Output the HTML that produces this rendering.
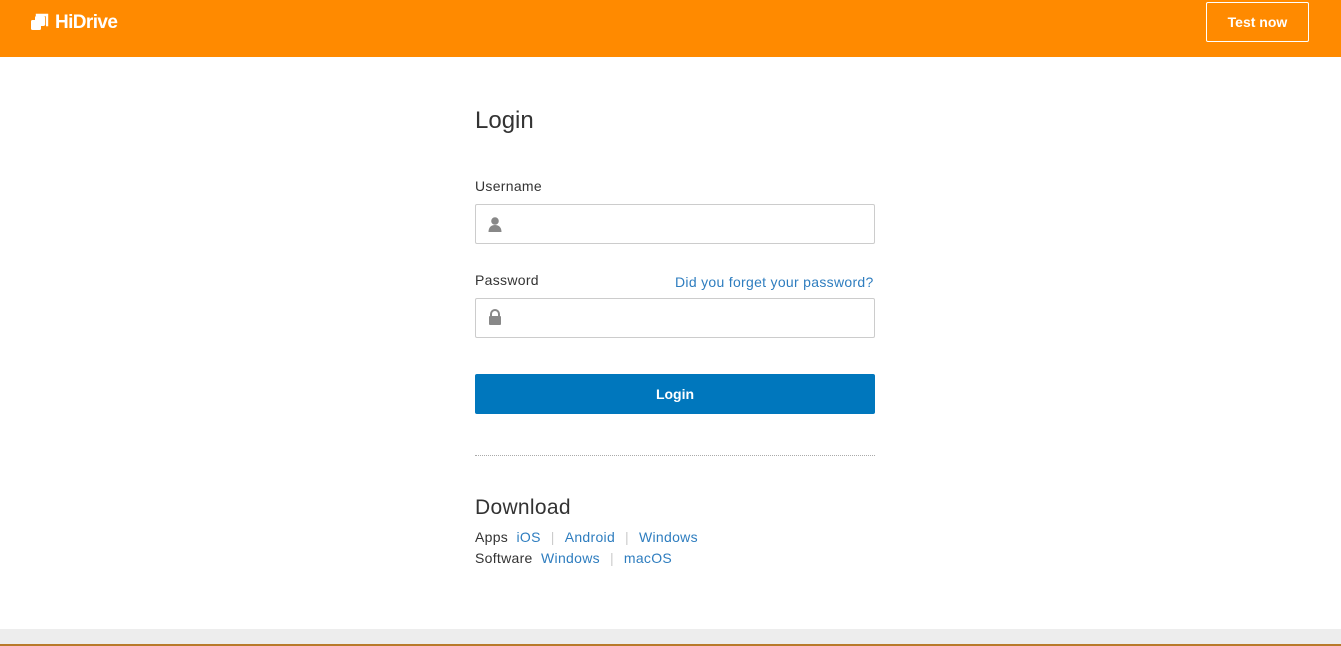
<!DOCTYPE html>
<html><head><style>
*{margin:0;padding:0;box-sizing:border-box}
body{width:1341px;height:646px;overflow:hidden;background:#fff;font-family:"Liberation Sans",sans-serif;position:relative;color:#333}
.hdr{position:absolute;left:0;top:0;width:1341px;height:57px;background:#ff8a00}
.logo{position:absolute;top:12px;color:#fff;font-weight:bold;font-size:19px;letter-spacing:-0.6px}
.btn{position:absolute;left:1206px;top:2px;width:103px;height:40px;border:1px solid #fff;border-radius:2px;color:#fff;font-weight:bold;font-size:14px;text-align:center;line-height:38px}
.abs{position:absolute}
.t{letter-spacing:0.3px}
.inp{position:absolute;left:475px;width:400px;height:40px;border:1px solid #ccc;border-radius:2px;background:#fff}
a{color:#2e7dbf;text-decoration:none}
.sep{color:#ccc;margin:0 10px}
</style></head><body>
<div class="hdr">
 <svg class="abs" style="left:30px;top:12px" width="20" height="20" viewBox="0 0 20 20"><path d="M7 4V3h10v10h-1" fill="none" stroke="#fff" stroke-width="2.4"/><rect x="1" y="8" width="10" height="10" rx="1.5" fill="#fff"/><rect x="5" y="4" width="10" height="10" rx="1.5" fill="#fff"/></svg>
 <div class="logo" style="left:55px">HiDrive</div>
 <div class="btn">Test now</div>
</div>
<div class="abs" style="left:475px;top:107px;font-size:24px">Login</div>
<div class="abs t" style="left:475px;top:178px;font-size:14px">Username</div>
<div class="inp" style="top:204px"><svg class="abs" style="left:11px;top:11px" width="16" height="16" viewBox="0 0 16 16"><circle cx="8" cy="5" r="3.8" fill="#888"/><path d="M1.5 16c0-5 3-7 6.5-7s6.5 2 6.5 7z" fill="#888"/></svg></div>
<div class="abs t" style="left:475px;top:272px;font-size:14px">Password</div>
<div class="abs t" style="left:675px;top:274px;font-size:14px"><a>Did you forget your password?</a></div>
<div class="inp" style="top:298px"><svg class="abs" style="left:12px;top:10px" width="14" height="16" viewBox="0 0 14 16"><path d="M3 7V5a4 4 0 0 1 8 0v2" fill="none" stroke="#888" stroke-width="2"/><rect x="1" y="7" width="12" height="9" rx="1" fill="#888"/></svg></div>
<div class="abs" style="left:475px;top:374px;width:400px;height:40px;background:#0077bd;border-radius:2px;color:#fff;font-weight:bold;font-size:14px;text-align:center;line-height:40px">Login</div>
<div class="abs" style="left:475px;top:455px;width:400px;border-top:1px dotted #aaa"></div>
<div class="abs" style="left:475px;top:496px;font-size:21px;letter-spacing:0.3px">Download</div>
<div class="abs t" style="left:475px;top:527px;font-size:14px;line-height:21px">Apps &nbsp;<a>iOS</a><span class="sep">|</span><a>Android</a><span class="sep">|</span><a>Windows</a><br>Software &nbsp;<a>Windows</a><span class="sep">|</span><a>macOS</a></div>
<div class="abs" style="left:0;top:629px;width:1341px;height:15px;background:#ededed"></div>
<div class="abs" style="left:0;top:644px;width:1341px;height:2px;background:#b87a2a"></div>
</body></html>
